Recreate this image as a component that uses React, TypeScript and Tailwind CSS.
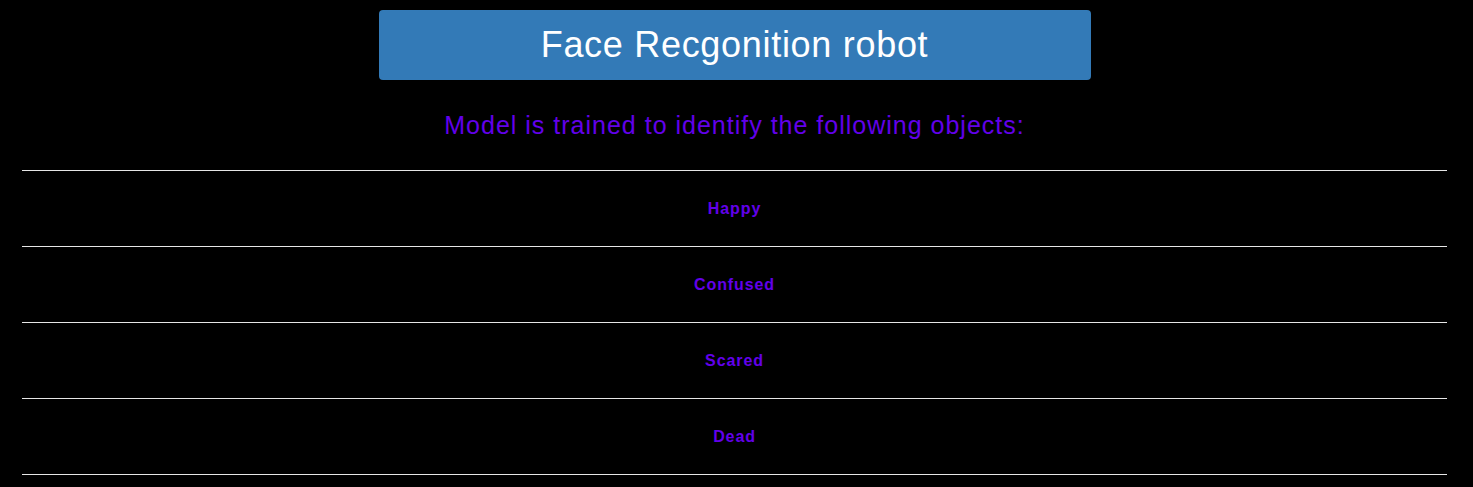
import React from "react";

const objects = ["Happy", "Confused", "Scared", "Dead"];

function App() {
    return (
        <div className="min-h-screen bg-black text-white font-[family-name:'Liberation_Sans',Arial,sans-serif]">
            <div className="ml-[22px] w-[1425px]">
                <div className="flex justify-center pt-[10px]">
                    <div className="w-[712px] h-[70px] bg-[#337ab7] rounded-[4px] flex items-center justify-center">
                        <h1 className="text-[36px] leading-none tracking-[0.7px] text-white">Face Recgonition robot</h1>
                    </div>
                </div>
                <h2 className="text-center text-[25px] leading-none tracking-[1px] text-[#6200ea] pt-[33px] pb-[32px]">
                    Model is trained to identify the following objects:
                </h2>
                <div className="border-t border-[#e6e6e6]">
                    {objects.map((name) => (
                        <div
                            key={name}
                            className="h-[76px] border-b border-[#e6e6e6] flex items-center justify-center"
                        >
                            <span className="text-[16px] font-bold tracking-[0.9px] text-[#6200ea]">{name}</span>
                        </div>
                    ))}
                </div>
            </div>
        </div>
    );
}

export default App;
